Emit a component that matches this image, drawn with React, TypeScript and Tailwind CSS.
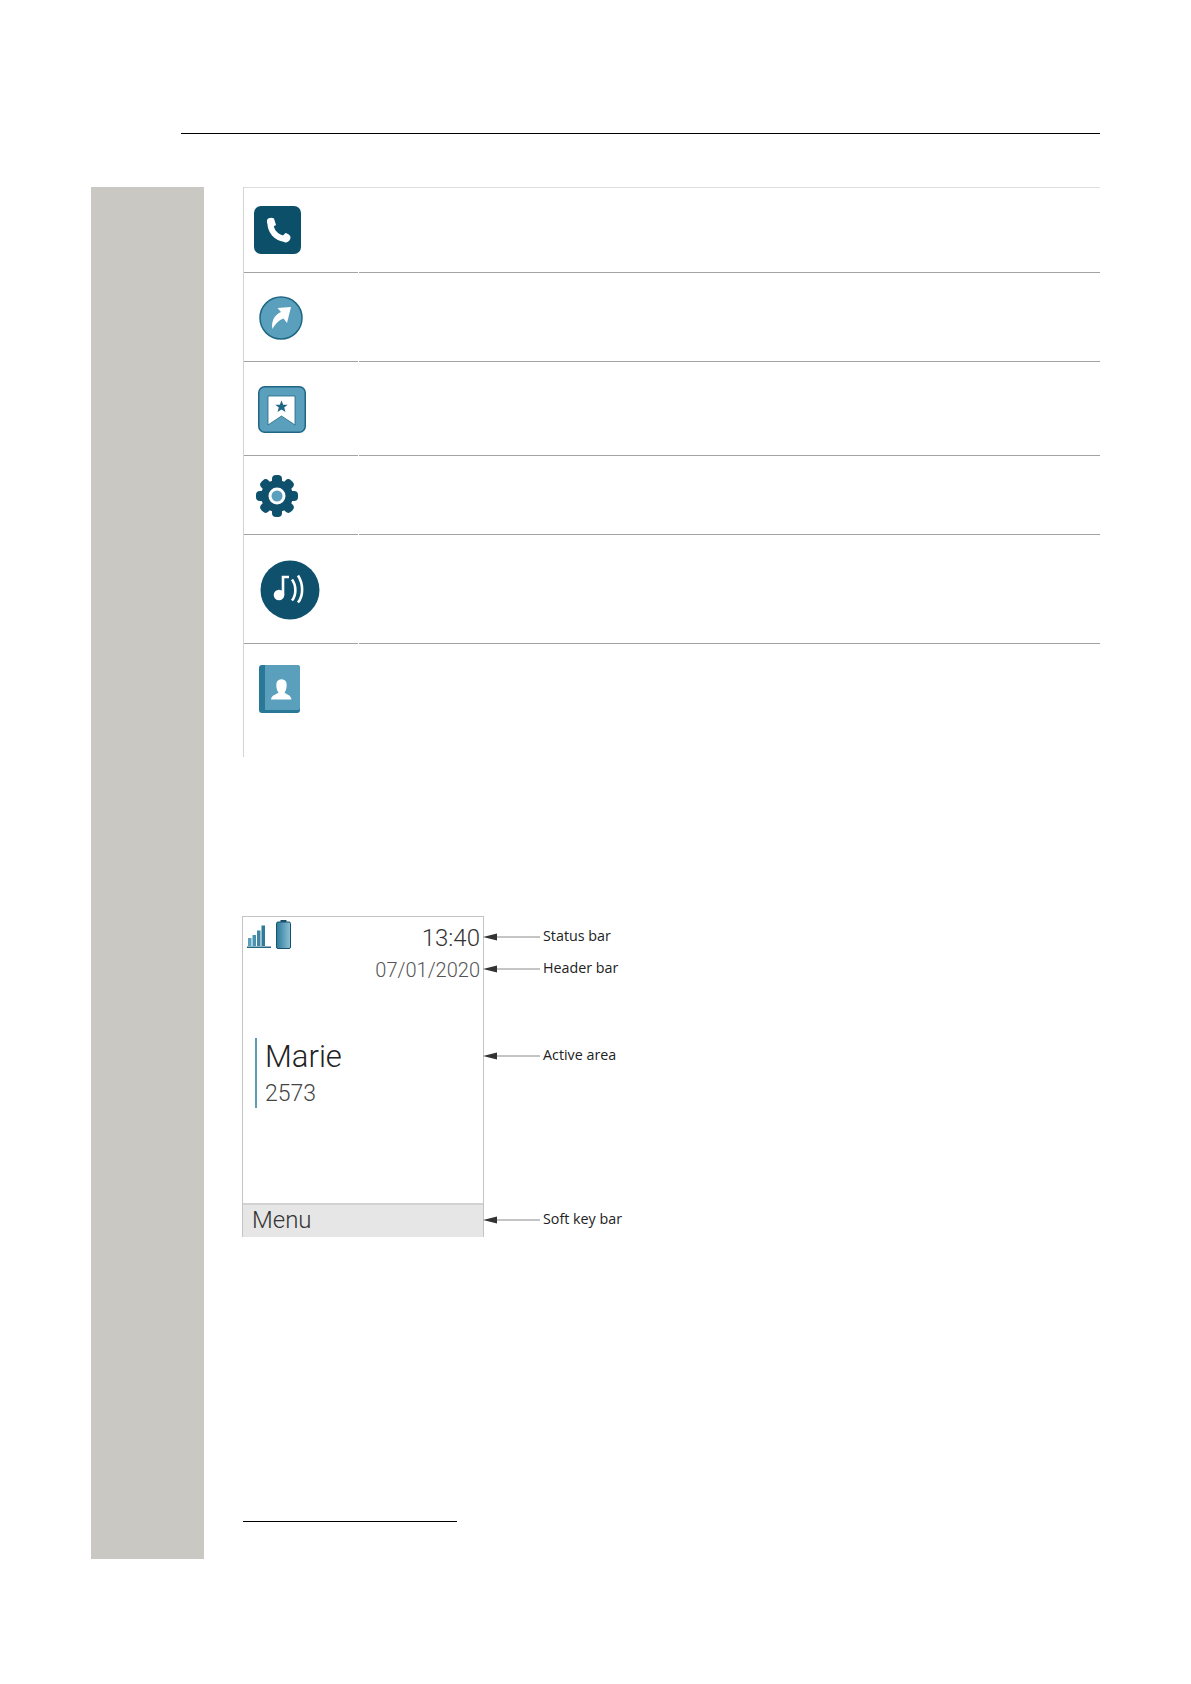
const phoneFont = "font-['Roboto','Liberation_Sans',sans-serif] font-light";

function PhoneIcon() {
  return (
    <svg width="47" height="48" viewBox="0 0 47 48">
      <rect width="47" height="48" rx="7" fill="#0b4f69" />
      <path d="M16.500 16C16 25 22 32 31.500 33" fill="none" stroke="#fff" strokeWidth="6" />
      <path d="M13 14C14 11.500 18 11 20 12.500L22 19L17 22C14 20 12.500 16.500 13 14Z" fill="#fff" />
      <path d="M27.500 31L31.500 27C34 27.500 36.500 29.500 36.500 31.500C36.500 34 34 36.500 31.500 36.500C29.500 36.500 28 33.500 27.500 31Z" fill="#fff" />
    </svg>
  );
}

function ForwardIcon() {
  return (
    <svg width="44" height="44" viewBox="0 0 44 44">
      <circle cx="22" cy="22" r="21" fill="#5a9fbc" stroke="#1f6785" strokeWidth="1.500" />
      <path d="M32 11L18.500 12L22 16C15 19 12 26 13.500 33C16 28 20 24 24.500 22.500L28 27Z" fill="#fff" />
    </svg>
  );
}

function BookmarkIcon() {
  return (
    <svg width="48" height="47" viewBox="0 0 48 47">
      <rect x="0.750" y="0.750" width="46.500" height="45.500" rx="6" fill="#5a9fbc" stroke="#1f6785" strokeWidth="1.500" />
      <path d="M10 10H37V39L23.500 30L10 39Z" fill="#fff" stroke="#1f6785" strokeWidth="0.800" />
      <path d="M23.500 14.500L25.200 18.700H29.700L26.200 21.500L27.500 26L23.500 23.500L19.500 26L20.800 21.500L17.300 18.700H21.800Z" fill="#1f6785" />
    </svg>
  );
}

function GearIcon() {
  const teeth = [0, 45, 90, 135, 180, 225, 270, 315];
  return (
    <svg width="42" height="42" viewBox="0 0 42 42">
      {teeth.map((a) => (
        <rect key={a} x="16" y="0" width="10" height="12" rx="4" fill="#0f506d" transform={`rotate(${a} 21 21)`} />
      ))}
      <circle cx="21" cy="21" r="16" fill="#0f506d" />
      <circle cx="21" cy="21" r="8.500" fill="#fff" />
      <circle cx="21" cy="21" r="5.500" fill="#5a9fbc" />
    </svg>
  );
}

function MusicIcon() {
  return (
    <svg width="60" height="60" viewBox="0 0 60 60">
      <circle cx="30" cy="30" r="29.500" fill="#0f506d" />
      <circle cx="19" cy="35" r="5.300" fill="#fff" />
      <path d="M23 35V17H29" fill="none" stroke="#fff" strokeWidth="2.600" />
      <path d="M32 19.500C36.500 25.500 36.500 35 32 40.500" fill="none" stroke="#fff" strokeWidth="2.600" />
      <path d="M38 15.500C43.500 24 43.500 36 38 42.500" fill="none" stroke="#fff" strokeWidth="2.600" />
    </svg>
  );
}

function BookIcon() {
  return (
    <svg width="41" height="48" viewBox="0 0 41 48">
      <path d="M3 0H38A3 3 0 0 1 41 3V45A3 3 0 0 1 38 48H3A3 3 0 0 1 0 45V3A3 3 0 0 1 3 0Z" fill="#2a7897" />
      <path d="M6 0H38A3 3 0 0 1 41 3V43A2 2 0 0 1 39 45H6Z" fill="#5a9fbc" />
      <path d="M12 34.500C12.500 30 17.500 29.500 19.500 27.500C17.500 25 17 21 17.500 18C18.500 13 26.500 13 27.500 18C28 21 27.500 25 25.500 27.500C27.500 29.500 32 30 32.500 34.500Z" fill="#fff" />
    </svg>
  );
}

function SignalIcon() {
  return (
    <svg width="24" height="24" viewBox="0 0 24 24">
      <rect x="1" y="13" width="3.500" height="8" fill="#5a9fbc" />
      <rect x="5.500" y="10" width="3.500" height="11" fill="#4b92b0" />
      <rect x="10" y="5.500" width="3.500" height="15.500" fill="#3d86a5" />
      <rect x="14.500" y="0.500" width="3.500" height="20.500" fill="#2f7a9a" />
      <rect x="0" y="21.500" width="24" height="1.500" fill="#1f6785" />
    </svg>
  );
}

function BatteryIcon() {
  return (
    <svg width="15" height="29" viewBox="0 0 15 29">
      <defs>
        <linearGradient id="batt" x1="0" y1="0" x2="1" y2="0">
          <stop offset="0" stopColor="#2c7a9a" />
          <stop offset="1" stopColor="#8fc1d6" />
        </linearGradient>
      </defs>
      <rect x="4.500" y="0" width="6" height="3" fill="#16506b" />
      <rect x="0.500" y="2" width="14" height="26.500" rx="1.500" fill="url(#batt)" stroke="#16506b" />
    </svg>
  );
}

function Row({ height, pad, children }: { height: string; pad: string; children: React.ReactNode }) {
  return (
    <div className={`flex ${height}`}>
      <div className={`w-[114px] border-b border-[#a3a3a3] ${pad}`}>{children}</div>
      <div className="ml-px flex-1 border-b border-[#a3a3a3]" />
    </div>
  );
}

function Note({ label, gap }: { label: string; gap: string }) {
  return (
    <div className={`flex h-5 items-center ${gap}`}>
      <svg width="60" height="8" viewBox="0 0 60 8" className="-ml-px shrink-0">
        <path d="M0 4L14 0.500V7.500Z" fill="#333" />
        <path d="M14 4H57" stroke="#8a8a8a" strokeWidth="1" />
      </svg>
      <span className="mb-[2px] font-['Open_Sans','Liberation_Sans',sans-serif] text-[14.3px] leading-5 text-[#222]">{label}</span>
    </div>
  );
}

export default function App() {
  return (
    <div className="min-h-[1684px] bg-white pt-[133px]">
      <div className="ml-[181px] h-px w-[919px] bg-black" />
      <div className="mt-[53px] flex pl-[91px]">
        <div className="h-[1372px] w-[113px] bg-[#c9c8c3]" />
        <div className="ml-[39px] w-[857px]">
          {/* Icon table */}
          <div className="h-[570px] border-l border-[#d4d4d4]">
            <div className="h-px bg-[#dedede]" />
            <Row height="h-[85px]" pad="pl-[10px] pt-[18px]"><PhoneIcon /></Row>
            <Row height="h-[89px]" pad="pl-[15px] pt-[23px]"><ForwardIcon /></Row>
            <Row height="h-[94px]" pad="pl-[14px] pt-[24px]"><BookmarkIcon /></Row>
            <Row height="h-[79px]" pad="pl-[12px] pt-[19px]"><GearIcon /></Row>
            <Row height="h-[109px]" pad="pl-[16px] pt-[25px]"><MusicIcon /></Row>
            <div className="pl-[15px] pt-[21px]"><BookIcon /></div>
          </div>

          {/* Phone display */}
          <div className="mt-[159px] -ml-px flex">
            <div className="flex h-[321px] w-[242px] flex-col border-x border-t border-[#c4c4c4]">
              <div className="flex h-[41px] justify-between pl-[4px] pr-[3px]">
                <div className="flex items-start gap-[5px] pt-[3px]">
                  <div className="pt-[5px]"><SignalIcon /></div>
                  <BatteryIcon />
                </div>
                <div className={`${phoneFont} pt-[7px] text-[24px] leading-7 text-[#333]`}>13:40</div>
              </div>
              <div className={`${phoneFont} text-right pr-[3px] text-[20px] leading-6 text-[#555]`}>07/01/2020</div>
              <div className="ml-[12px] mt-[56px] h-[70px] border-l-2 border-[#5a9fb5] pl-[8px] pt-px">
                <div className={`${phoneFont} text-[31px] leading-9 text-[#222]`}>Marie</div>
                <div className={`${phoneFont} mt-[5px] text-[23px] leading-7 text-[#444]`}>2573</div>
              </div>
              <div className="mt-auto h-[34px] border-t-2 border-[#d2d2d2] bg-[#e6e6e6] pl-[9px]">
                <div className={`${phoneFont} text-[24px] leading-[30px] text-[#333]`}>Menu</div>
              </div>
            </div>
            <div className="flex flex-col">
              <Note label="Status bar" gap="mt-[11px]" />
              <Note label="Header bar" gap="mt-[12px]" />
              <Note label="Active area" gap="mt-[67px]" />
              <Note label="Soft key bar" gap="mt-[144px]" />
            </div>
          </div>

          {/* Footnote rule */}
          <div className="mt-[284px] h-px w-[214px] bg-black" />
        </div>
      </div>
    </div>
  );
}
